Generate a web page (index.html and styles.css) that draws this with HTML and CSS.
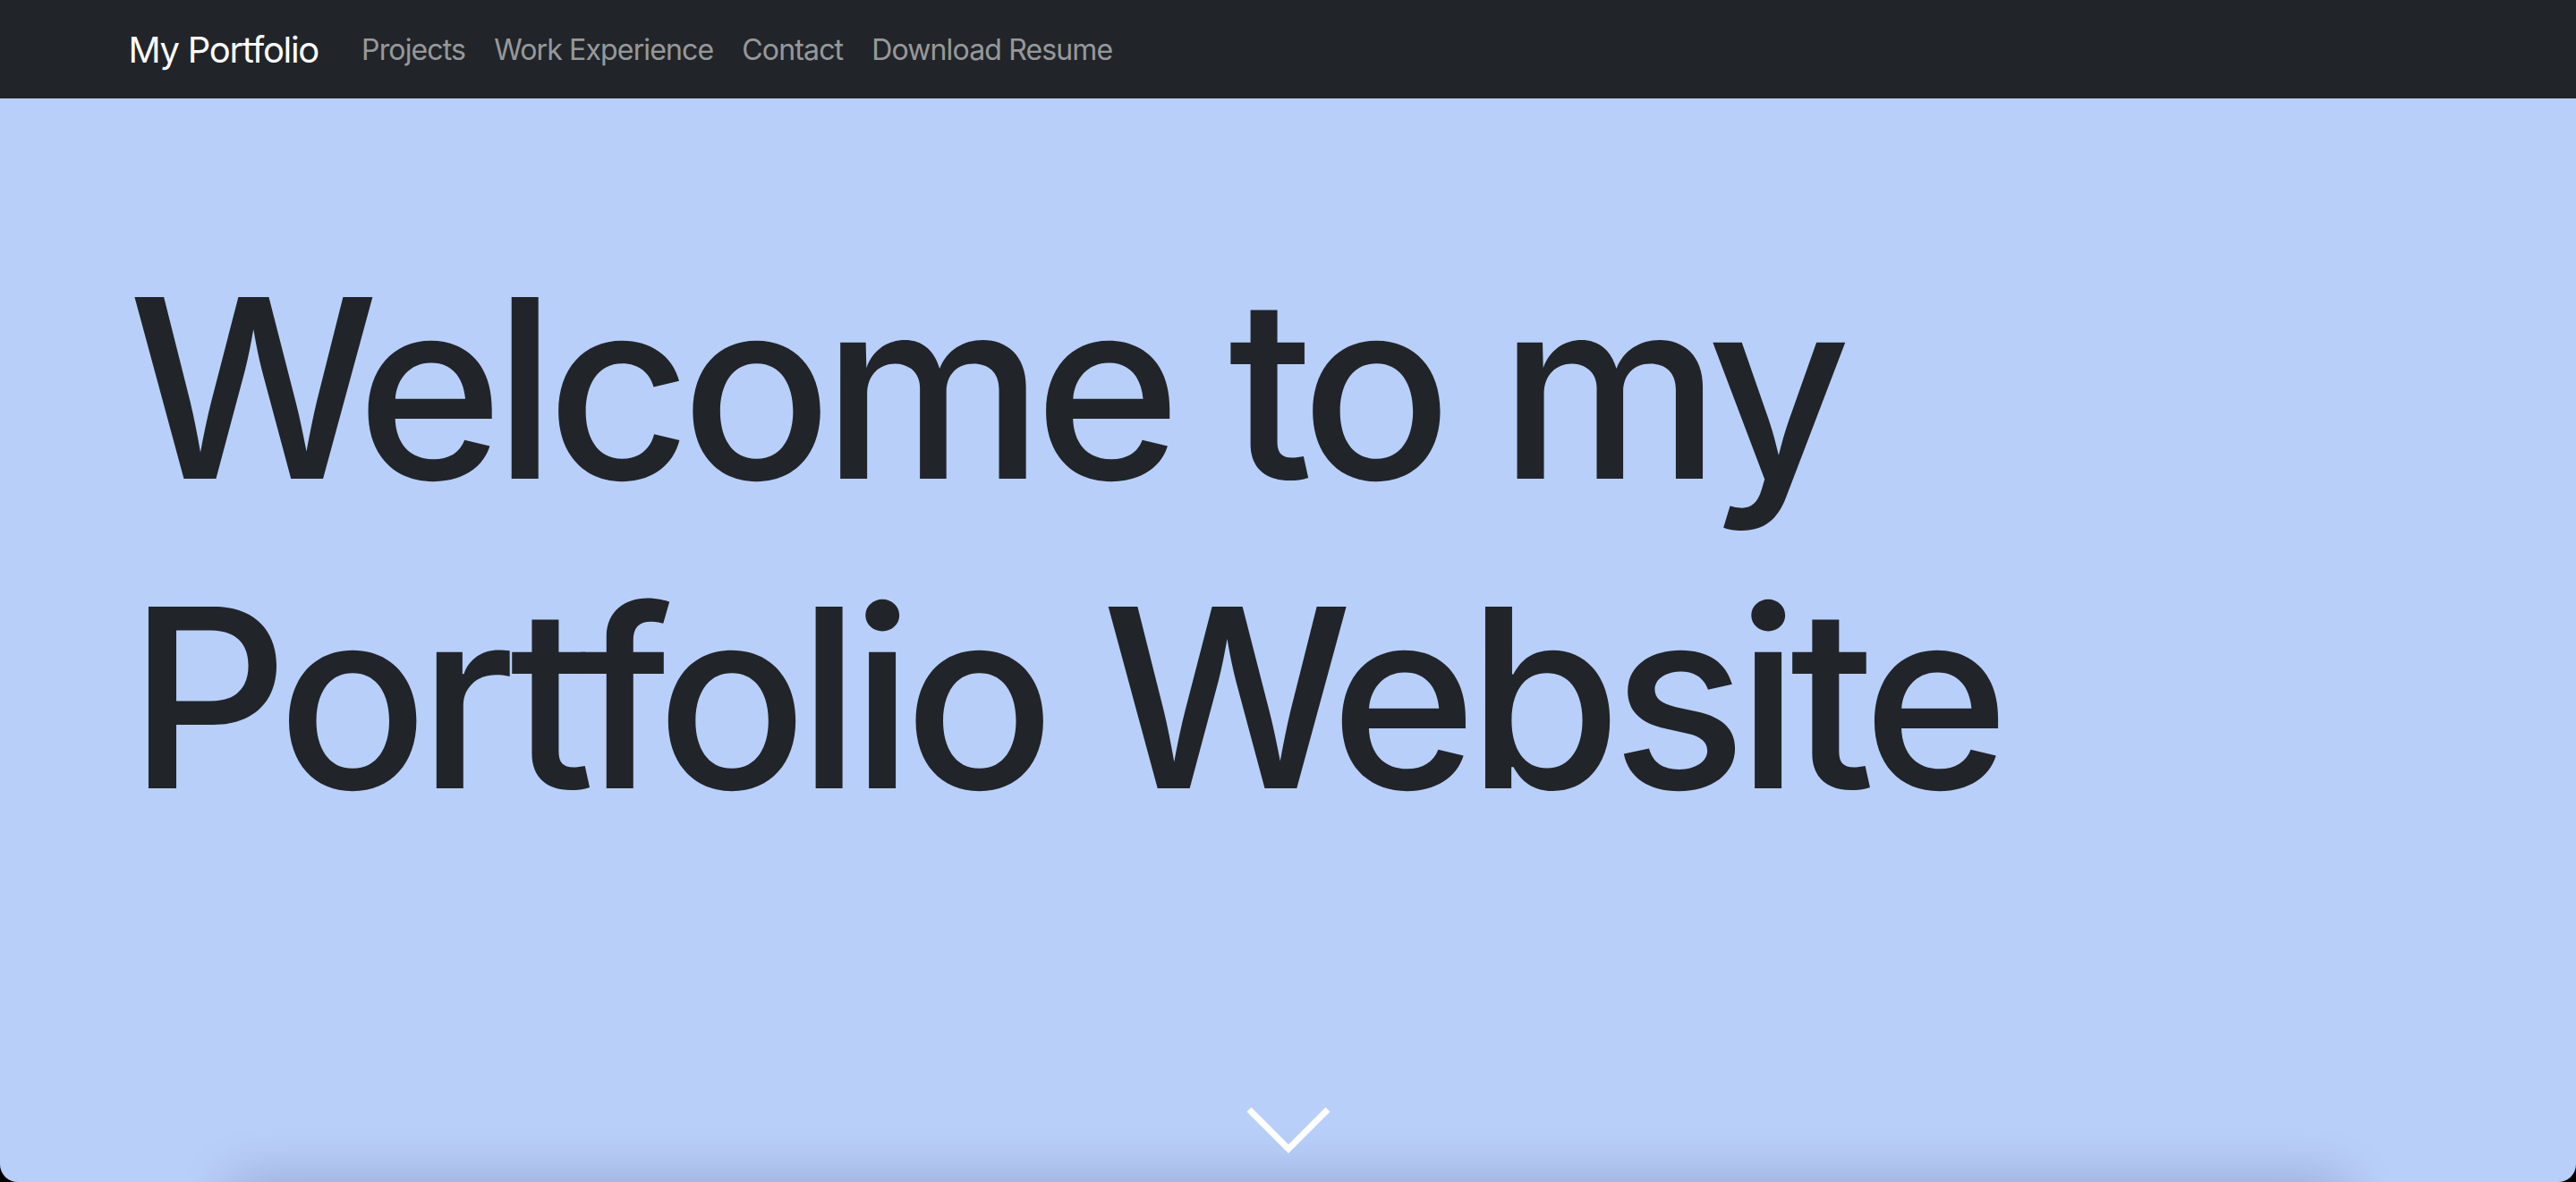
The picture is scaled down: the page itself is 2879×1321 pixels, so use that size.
FILE: index.html
```html
<!DOCTYPE html>
<html lang="en">
<head>
<meta charset="utf-8">
<title>My Portfolio</title>
<link rel="stylesheet" href="styles.css">
</head>
<body>
<div class="window">
  <nav class="navbar">
    <div class="container nav-inner">
      <a class="brand" href="#">My Portfolio</a>
      <ul class="nav-links">
        <li><a href="#projects">Projects</a></li>
        <li><a href="#work">Work Experience</a></li>
        <li><a href="#contact">Contact</a></li>
        <li><a href="#resume">Download Resume</a></li>
      </ul>
    </div>
  </nav>
  <section class="hero">
    <div class="container">
      <h1 class="hero-title">Welcome to my Portfolio Website</h1>
    </div>
    <a class="scroll-down" href="#projects" aria-label="Scroll down">
      <svg width="100" height="56" viewBox="0 0 100 56" aria-hidden="true">
        <polyline points="6,6 50,50 94,6" fill="none" stroke="#ffffff" stroke-width="7"/>
      </svg>
    </a>
  </section>
</div>
</body>
</html>
```
FILE: styles.css
```css
html {
  background: #000;
}
body {
  margin: 0;
  font-family: Inter, "Noto Sans", "Liberation Sans", sans-serif;
  color: #212529;
}
.window {
  height: 100vh;
  overflow: hidden;
  border-radius: 0 0 20px 20px;
  display: flex;
  flex-direction: column;
  position: relative;
  box-shadow: inset 2px 0 0 rgba(255, 255, 255, 0.22), inset -1px 0 0 rgba(255, 255, 255, 0.18);
}
.container {
  max-width: 2640px;
  margin: 0 auto;
  padding: 0 24px;
  width: 100%;
  box-sizing: border-box;
}
.navbar {
  background: #212529;
  height: 110px;
  flex: none;
  display: flex;
  align-items: center;
}
.nav-inner {
  display: flex;
  align-items: center;
}
.brand {
  color: #fff;
  font-size: 40px;
  text-decoration: none;
  margin-right: 32px;
  letter-spacing: -1.3px;
}
.nav-links {
  list-style: none;
  margin: 0;
  padding: 0;
  display: flex;
}
.nav-links a {
  display: block;
  padding: 0 16px;
  font-size: 32px;
  color: rgba(255, 255, 255, 0.55);
  text-decoration: none;
  letter-spacing: -0.85px;
}
.hero {
  flex: 1;
  background: #b8cffa;
  display: flex;
  flex-direction: column;
  position: relative;
  overflow: hidden;
}
.hero::after {
  content: "";
  position: absolute;
  left: 260px;
  right: 260px;
  top: 100%;
  height: 120px;
  box-shadow: 0 0 60px 0 rgba(0, 10, 40, 0.22);
}
.hero-title {
  margin: 0;
  padding-top: 151px;
  font-size: 279px;
  font-weight: 500;
  line-height: 346px;
  letter-spacing: -10.8px;
  max-width: 2300px;
}
.scroll-down {
  margin-top: auto;
  margin-bottom: 31px;
  align-self: center;
  display: block;
  line-height: 0;
  position: relative;
  z-index: 1;
}
```
